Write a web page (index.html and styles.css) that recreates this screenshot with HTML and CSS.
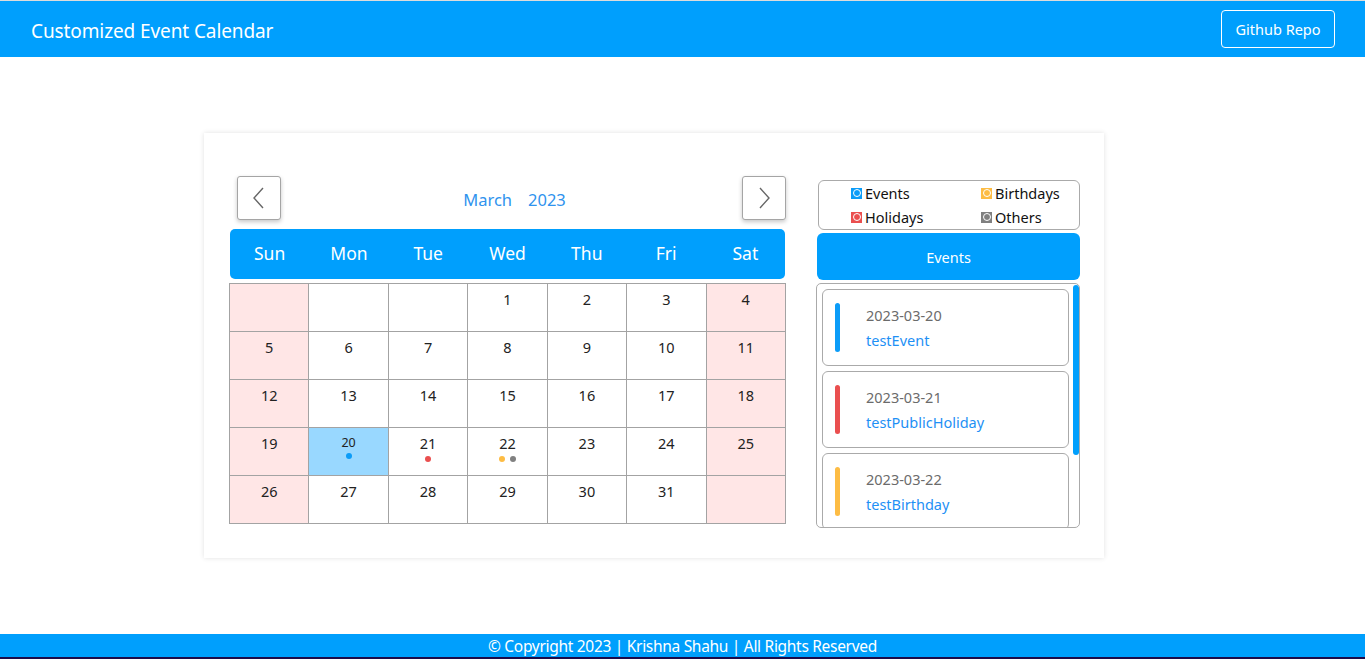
FILE: index.html
```html
<!DOCTYPE html>
<html lang="en">
<head>
<meta charset="utf-8">
<title>Customized Event Calendar</title>
<link rel="stylesheet" href="styles.css">
</head>
<body>
<header class="topbar">
  <div class="brand">Customized Event Calendar</div>
  <a class="repo-btn" href="#">Github Repo</a>
</header>

<main class="page">
  <section class="card">
    <div class="calendar">
      <div class="nav">
        <button class="nav-btn"><svg width="14" height="22" viewBox="0 0 14 22"><path d="M11 1 L2 11 L11 21" fill="none" stroke="#666" stroke-width="1.4"/></svg></button>
        <div class="month"><span>March</span><span>2023</span></div>
        <button class="nav-btn"><svg width="14" height="22" viewBox="0 0 14 22"><path d="M3 1 L12 11 L3 21" fill="none" stroke="#666" stroke-width="1.4"/></svg></button>
      </div>
      <div class="weekdays">
        <span>Sun</span><span>Mon</span><span>Tue</span><span>Wed</span><span>Thu</span><span>Fri</span><span>Sat</span>
      </div>
      <table class="grid">
        <tr>
          <td class="wk"></td><td></td><td></td><td>1</td><td>2</td><td>3</td><td class="wk">4</td>
        </tr>
        <tr>
          <td class="wk">5</td><td>6</td><td>7</td><td>8</td><td>9</td><td>10</td><td class="wk">11</td>
        </tr>
        <tr>
          <td class="wk">12</td><td>13</td><td>14</td><td>15</td><td>16</td><td>17</td><td class="wk">18</td>
        </tr>
        <tr>
          <td class="wk">19</td>
          <td class="today"><div class="num-sm">20</div><div class="dots"><i class="dot blue"></i></div></td>
          <td>21<div class="dots low"><i class="dot red"></i></div></td>
          <td>22<div class="dots low"><i class="dot yellow"></i><i class="dot gray"></i></div></td>
          <td>23</td><td>24</td><td class="wk">25</td>
        </tr>
        <tr>
          <td class="wk">26</td><td>27</td><td>28</td><td>29</td><td>30</td><td>31</td><td class="wk"></td>
        </tr>
      </table>
    </div>

    <aside class="side">
      <div class="legend">
        <div class="lg"><span class="sq blue"><b></b></span>Events</div>
        <div class="lg"><span class="sq yellow"><b></b></span>Birthdays</div>
        <div class="lg"><span class="sq red"><b></b></span>Holidays</div>
        <div class="lg"><span class="sq gray"><b></b></span>Others</div>
      </div>
      <div class="events-head">Events</div>
      <div class="list">
        <div class="item"><span class="bar blue"></span><div class="txt"><div class="date">2023-03-20</div><div class="name">testEvent</div></div></div>
        <div class="item"><span class="bar red"></span><div class="txt"><div class="date">2023-03-21</div><div class="name">testPublicHoliday</div></div></div>
        <div class="item"><span class="bar yellow"></span><div class="txt"><div class="date">2023-03-22</div><div class="name">testBirthday</div></div></div>
        <span class="thumb"></span>
      </div>
    </aside>
  </section>
</main>

<footer class="footer">© Copyright 2023 | Krishna Shahu | All Rights Reserved</footer>
</body>
</html>
```

FILE: styles.css
```css
* { box-sizing: border-box; }
html, body { margin: 0; padding: 0; }
body {
  font-family: "Noto Sans", "Open Sans", "Liberation Sans", sans-serif;
  background: #fff;
  color: #222;
  height: 659px;
  overflow: hidden;
}

.topbar {
  height: 57px;
  border-top: 1px solid #dcdcdc;
  background: #009ffd;
  display: flex;
  align-items: center;
  justify-content: space-between;
  padding: 0 30px 0 31px;
}
.brand {
  color: #fff;
  font-size: 19px;
  letter-spacing: -0.1px;
  padding-top: 3px;
}
.repo-btn {
  color: #fff;
  text-decoration: none;
  border: 1px solid #fff;
  border-radius: 4px;
  font-size: 14.5px;
  height: 38px;
  width: 114px;
  display: flex;
  align-items: center;
  justify-content: center;
  margin-top: -1px;
}

.page {
  padding: 76px 0 0 204px;
}
.card {
  width: 900px;
  height: 425px;
  background: #fff;
  box-shadow: 0 0 5px rgba(0,0,0,0.12);
  display: flex;
  padding: 43px 24px 0 25px;
  gap: 31px;
}

.calendar { width: 557px; }
.nav {
  height: 44px;
  display: flex;
  align-items: center;
  justify-content: space-between;
  padding-left: 8px;
}
.nav-btn {
  width: 44px;
  height: 44px;
  background: #fff;
  border: 1px solid #a5a5a5;
  border-radius: 3px;
  box-shadow: 0 2px 4px rgba(0,0,0,0.22);
  display: flex;
  align-items: center;
  justify-content: center;
  padding: 0;
}
.month {
  color: #2f93ee;
  font-size: 16.5px;
  display: flex;
  gap: 16px;
  margin-left: 6px;
  padding-top: 2px;
}
.weekdays {
  margin: 9px 1px 4px 1px;
  height: 50px;
  background: #009ffd;
  border-radius: 5px;
  display: grid;
  grid-template-columns: repeat(7, 1fr);
  align-items: center;
  color: #fff;
  font-size: 17.5px;
  text-align: center;
  padding-bottom: 2px;
}

.grid {
  width: 557px;
  border-collapse: collapse;
  table-layout: fixed;
}
.grid td {
  border: 1px solid #a3a3a3;
  height: 48px;
  vertical-align: top;
  text-align: center;
  font-size: 14.5px;
  line-height: 20px;
  padding: 5px 0 0;
  color: #222;
}
.grid td.wk { background: #ffe6e6; }
.grid td.today { background: #99d8ff; }
.num-sm { font-size: 12.5px; line-height: 18px; padding-top: 1px; }
.dots { display: flex; justify-content: center; gap: 5px; height: 6px; margin-top: 1px; }
.dots.low { margin-top: 3px; }
.dot { width: 6px; height: 6px; border-radius: 50%; display: block; }
.dot.blue, .bar.blue, .sq.blue { background: #0b9cf8; }
.dot.red, .bar.red, .sq.red { background: #ea4f4f; }
.dot.yellow, .bar.yellow, .sq.yellow { background: #fdbc44; }
.dot.gray, .bar.gray, .sq.gray { background: #808080; }

.side {
  width: 263px;
  padding-top: 4px;
}
.legend {
  margin-left: 1px;
  height: 50px;
  border: 1px solid #aaa;
  border-radius: 6px;
  display: grid;
  grid-template-columns: 130px 1fr;
  padding: 0 0 0 32px;
  font-size: 14.5px;
  line-height: 24px;
  color: #111;
}
.lg { display: flex; align-items: center; gap: 3px; }
.sq {
  width: 11px;
  height: 11px;
  display: inline-flex;
  align-items: center;
  justify-content: center;
}
.sq b {
  width: 8px;
  height: 8px;
  border: 1.3px solid #fff;
  border-radius: 50%;
  display: block;
}
.events-head {
  margin-top: 3px;
  height: 47px;
  background: #009ffd;
  border-radius: 6px;
  color: #fff;
  font-size: 14.5px;
  display: flex;
  align-items: center;
  justify-content: center;
  padding-top: 1px;
}
.list {
  position: relative;
  margin-top: 3px;
  margin-left: -1px;
  height: 245px;
  border: 1px solid #aaa;
  border-radius: 5px;
  overflow: hidden;
  padding: 5px 10px 5px 5px;
  display: flex;
  flex-direction: column;
  gap: 5px;
}
.thumb {
  position: absolute;
  right: 0;
  top: 1px;
  width: 6px;
  height: 170px;
  background: #009ffd;
  border-radius: 3px;
}
.item {
  flex: 0 0 77px;
  border: 1px solid #aaa;
  border-radius: 6px;
  display: flex;
  padding: 13px 0 0 12px;
}
.bar {
  width: 5px;
  height: 49px;
  border-radius: 3px;
  flex: none;
}
.txt { margin-left: 26px; }
.date { color: #6b6b6b; font-size: 14.5px; line-height: 24px; }
.name { color: #1e90f5; font-size: 14.5px; line-height: 26px; }

.footer {
  position: fixed;
  left: 0; right: 0; bottom: 0;
  height: 25px;
  background: #009ffd;
  border-bottom: 2px solid #1c0a4a;
  color: #fff;
  text-align: center;
  font-size: 15.5px;
  line-height: 24px;
  letter-spacing: -0.3px;
}
```
